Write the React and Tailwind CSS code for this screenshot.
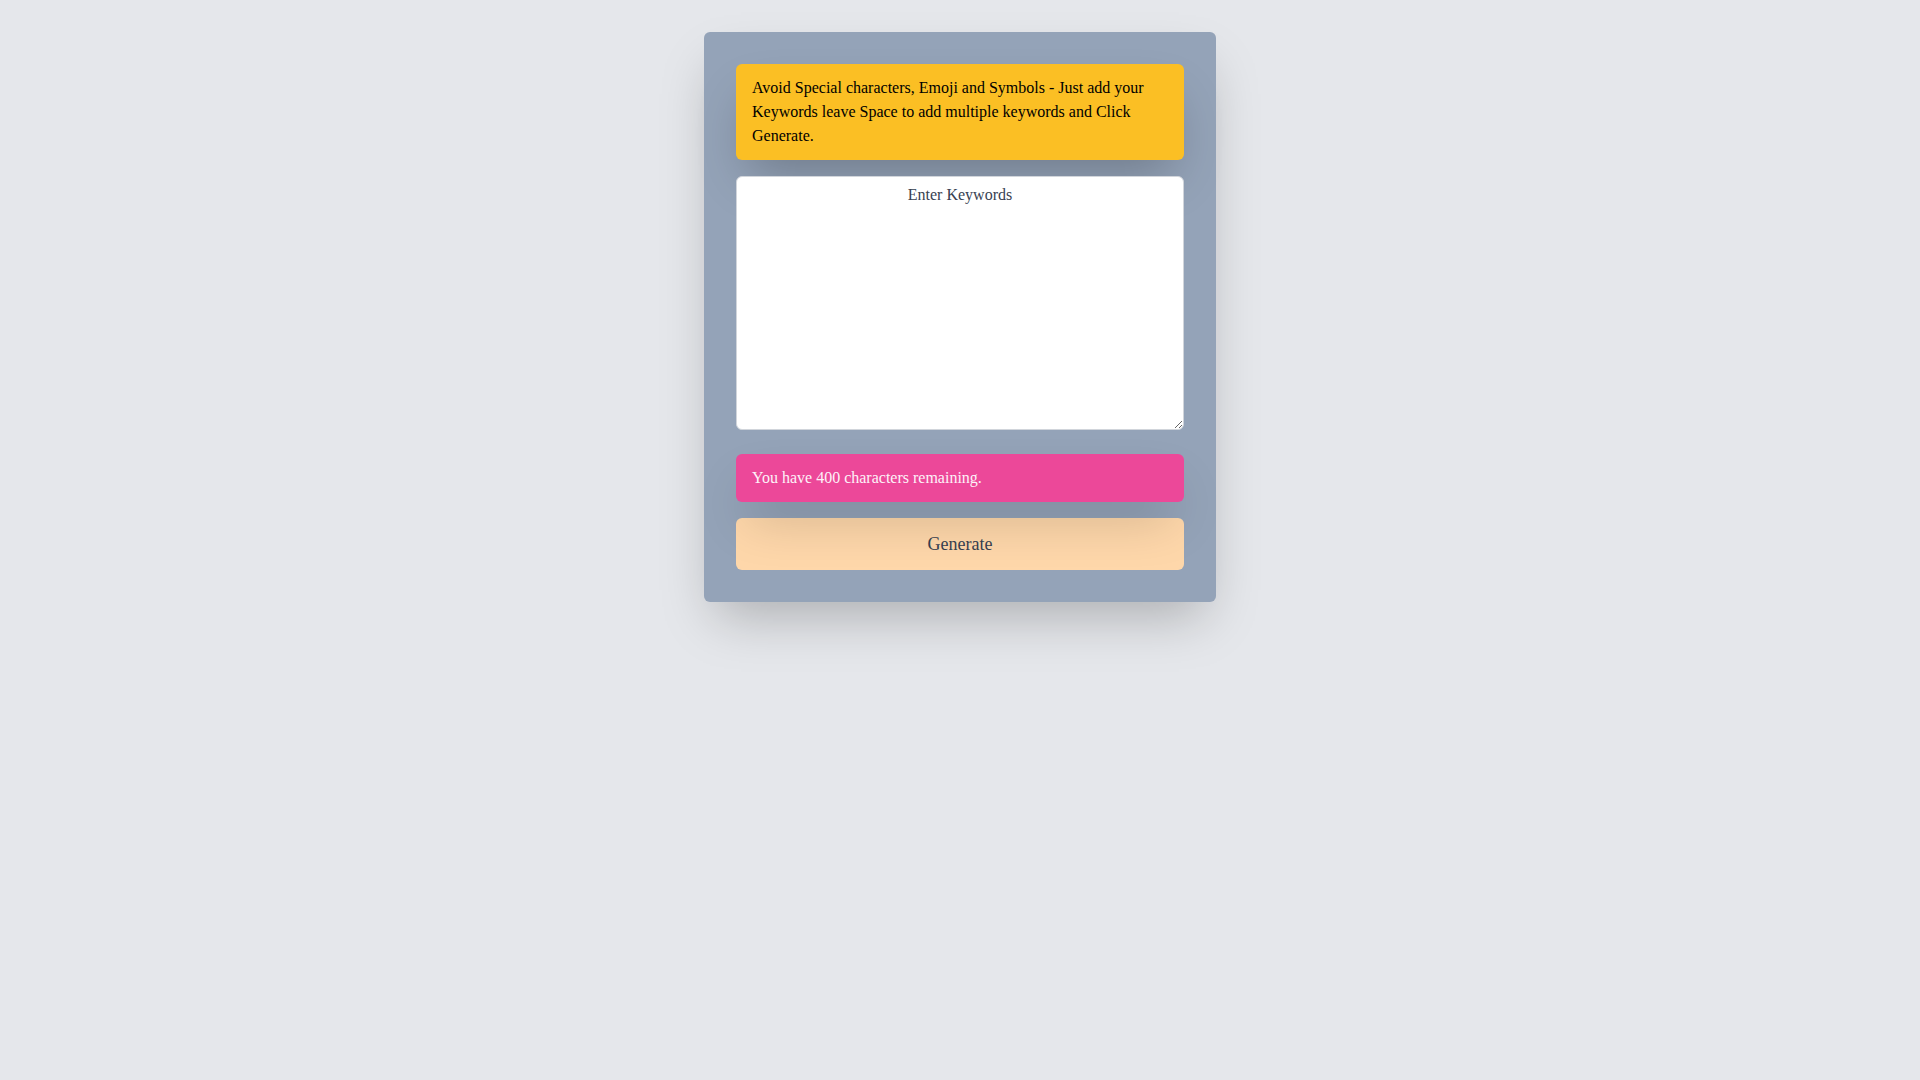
import { useState } from "react";

const App = () => {
  const [text, setText] = useState("");
  const max = 400;

  return (
    <div
      className="min-h-screen bg-[#e5e7eb] pt-8"
      style={{ fontFamily: '"Liberation Serif", "Times New Roman", serif' }}
    >
      {/* Card */}
      <div className="mx-auto w-[512px] rounded-md bg-[#94a3b8] p-8 shadow-2xl">
        {/* Notice */}
        <div className="mb-4 rounded-md bg-[#fbbf24] px-4 py-3 text-base leading-6 text-black shadow-2xl">
          Avoid Special characters, Emoji and Symbols - Just add your Keywords
          leave Space to add multiple keywords and Click Generate.
        </div>

        {/* Keywords */}
        <textarea
          value={text}
          onChange={(e) => setText(e.target.value.slice(0, max))}
          placeholder="Enter Keywords"
          className="mb-6 block h-[254px] w-full rounded-md border border-[#d1d5db] bg-white px-2 py-2 text-center text-base leading-5 text-[#374151] placeholder:text-[#374151] focus:outline-none"
        />

        {/* Counter */}
        <div className="relative z-10 mb-4 rounded-md bg-[#ec4899] px-4 py-3 text-base leading-6 text-[#fdf2f8] shadow-2xl">
          You have {max - text.length} characters remaining.
        </div>

        {/* Button */}
        <button className="block w-full rounded-md bg-[#fed7aa] py-3 text-lg leading-7 text-[#374151]">
          Generate
        </button>
      </div>
    </div>
  );
};

export default App;
